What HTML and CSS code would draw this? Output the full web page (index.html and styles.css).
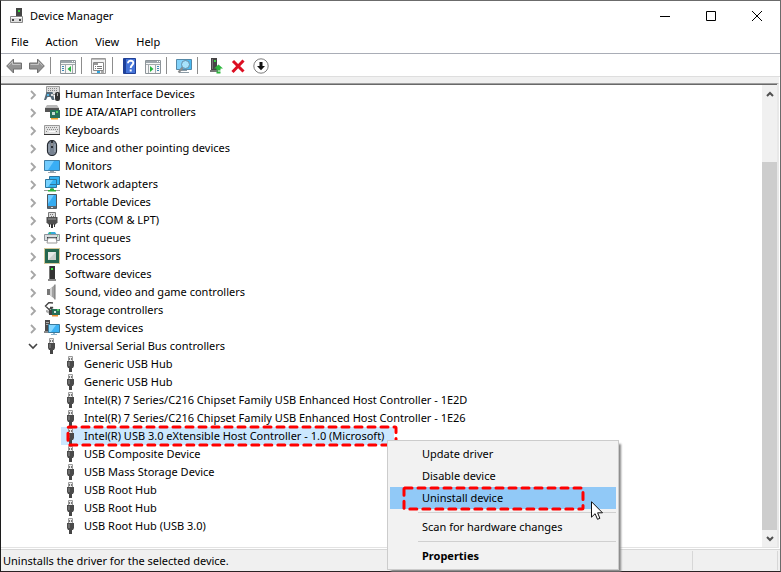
FILE: index.html
```
<!DOCTYPE html>
<html lang="en">
<head>
<meta charset="utf-8">
<title>Device Manager</title>
<link rel="stylesheet" href="styles.css">
</head>
<body>
<svg class="defs" aria-hidden="true">
  <symbol id="usb" viewBox="0 0 16 16">
    <path d="M5.500.500h4v5h-4z" fill="#ececec" stroke="#9c9c9c"/>
    <path d="M6 2h1v2H6zM8 2h1v2H8z" fill="#777"/>
    <path d="M4 5h7v5l-1 2H5l-1-2z" fill="#4a4a4a"/>
    <path d="M5 6h2v4H5z" fill="#6c6c6c"/>
    <path d="M6 12h3v4H6z" fill="#454545"/>
  </symbol>
  <symbol id="right" viewBox="0 0 8 10"><path d="M2 1l4 4-4 4" fill="none" stroke="#a6a6a6" stroke-width="1.800"/></symbol>
  <symbol id="screen" viewBox="0 0 16 16">
    <path d="M.500 2.500h15v10H.500z" fill="#39aef5" stroke="#3f7fa6"/>
    <path d="M1 3h9l-6 9H1z" fill="#72ccff"/>
    <path d="M6 13h4v1H6zM4 14h8v1H4z" fill="#9aa7b0"/>
  </symbol>
</svg>
<main class="window">
  <header class="titlebar">
    <svg class="icon" viewBox="0 0 16 16"><path d="M6 0h6v9H6z" fill="#454545"/><path d="M8 2h2v2H8z" fill="#35d63a"/><path d="M.500 8.500h12v6H.500z" fill="#ddd" stroke="#888"/><path d="M1 9h11v1H1z" fill="#fff"/><path d="M2 11h2v2H2zM9 11h2v2H9z" fill="#444"/></svg>
    <h1>Device Manager</h1>
    <button class="control" aria-label="Minimize"><svg viewBox="0 0 10 10"><path d="M0 5.500h10"/></svg></button>
    <button class="control" aria-label="Maximize"><svg viewBox="0 0 10 10"><path d="M.500.500h9v9h-9z"/></svg></button>
    <button class="control" aria-label="Close"><svg viewBox="0 0 10 10"><path d="M0 0l10 10M10 0L0 10"/></svg></button>
  </header>
  <nav class="menubar"><button>File</button><button>Action</button><button>View</button><button>Help</button></nav>
  <div class="toolbar">
    <button aria-label="Back"><svg class="icon" viewBox="0 0 16 16"><path d="M.700 8L7.500 1v4h8v6h-8v4z" fill="#939393" stroke="#707070"/><path d="M2.500 7.700l4-4.200v3h8" fill="none" stroke="#c4c4c4"/></svg></button>
    <button aria-label="Forward"><svg class="icon" viewBox="0 0 16 16"><path d="M15.300 8L8.500 1v4h-8v6h8v4z" fill="#939393" stroke="#707070"/><path d="M1.500 6.500h8v-3l4 4.200" fill="none" stroke="#c4c4c4"/></svg></button>
    <span class="divider"></span>
    <button aria-label="Show console tree"><svg class="icon" viewBox="0 0 16 16"><path d="M.500 2.500h15v13H.500z" fill="#f7f7f7" stroke="#8d9499"/><path d="M1 3h14v2H1z" fill="#9ca5ab"/><path d="M12 3h1v1h-1zM14 3h1v1h-1z" fill="#fff"/><path d="M1 6.500h14M5.500 7v8M12.500 7v8" stroke="#a3a9ad"/><path d="M2 8h2v1H2zM2 10h2v1H2zM2 12h2v1H2z" fill="#3d86b5"/><path d="M11 8v6l-3.500-3z" fill="#22b43d"/></svg></button>
    <span class="divider"></span>
    <button aria-label="Properties"><svg class="icon" viewBox="0 0 16 16"><path d="M.500.500h14v15H.500z" fill="#f4f4f4" stroke="#999"/><path d="M1 1h13v1H1z" fill="#bbb"/><path d="M2.500 4.500h10v8h-10z" fill="#fff" stroke="#888"/><path d="M3 5h4v2H3z" fill="#999"/><path d="M4 8h1v1H4zM4 10h1v1H4zM6 8h5v1H6zM6 10h5v1H6z" fill="#777"/><path d="M6 13h3v2H6z" fill="#2fa5df"/><path d="M10 13h3v2h-3z" fill="#aaa"/></svg></button>
    <span class="divider"></span>
    <button aria-label="Help"><svg class="icon" viewBox="0 0 16 16"><path d="M1.500.500h12v15h-12z" fill="#4473d8" stroke="#203f95"/><path d="M2 1h2v14H2z" fill="#1d419b"/><path d="M6 5.300c0-3.600 5.700-3.300 5.300-.2C11.100 7 8.700 7.200 8.700 10" fill="none" stroke="#fff" stroke-width="1.900"/><path d="M7.700 11.500h2v2h-2z" fill="#fff"/></svg></button>
    <button aria-label="Show action pane"><svg class="icon" viewBox="0 0 16 16"><path d="M.500 2.500h15v13H.500z" fill="#f7f7f7" stroke="#8d9499"/><path d="M1 3h14v2H1z" fill="#9ca5ab"/><path d="M12 3h1v1h-1zM14 3h1v1h-1z" fill="#fff"/><path d="M1 6.500h14M3.500 7v8M10.500 7v8" stroke="#a3a9ad"/><path d="M12 8h2v1h-2zM12 10h2v1h-2zM12 12h2v1h-2z" fill="#3d86b5"/><path d="M5 8v6l3.500-3z" fill="#22b43d"/></svg></button>
    <span class="divider"></span>
    <button aria-label="Scan for hardware changes"><svg class="icon" viewBox="0 0 16 16"><path d="M.500 1.500h15v10H.500z" fill="#4abaf2" stroke="#5589a8"/><path d="M1 2h8L4 11H1z" fill="#82d2fa"/><path d="M5 12h6v1H5zM3 14h10v1H3z" fill="#8c9ba5"/><path d="M7 9l-4.500 5.500" stroke="#8c8c8c" stroke-width="2"/><circle cx="9.500" cy="6.500" r="4" fill="#a6e2fb" stroke="#668da6"/></svg></button>
    <span class="divider"></span>
    <button aria-label="Update driver"><svg class="icon" viewBox="0 0 16 16"><path d="M4 0h6v13H4z" fill="#444"/><path d="M5 1h1v10H5z" fill="#777"/><path d="M7 2h2v2H7z" fill="#39d042"/><path d="M3 12h8v2H3z" fill="#777"/><path d="M11.500 6.500l4.500 4h-2.500V12h-4v-1.500H7z" fill="#2bb63b"/><path d="M9.500 12.500h4v1h-4zM9.500 14h4v1.500h-4z" fill="#2bb63b"/></svg></button>
    <button aria-label="Uninstall device"><svg class="icon" viewBox="0 0 16 16"><path d="M3 3l10.500 10.500M13.500 2.500l-11 11.500" fill="none" stroke="#dc0e22" stroke-width="3"/></svg></button>
    <button aria-label="Disable device"><svg class="icon" viewBox="0 0 16 16"><circle cx="8" cy="8" r="7.200" fill="#fff" stroke="#7d7d7d"/><path d="M6.500 4h3v4H12l-4 4.300L4 8h2.500z" fill="#111"/></svg></button>
  </div>
  <section class="content">
    <ul class="tree">
      <li><div class="row"><svg class="arrow"><use href="#right"/></svg><svg class="icon" viewBox="0 0 16 16"><path d="M2.500.500h13v8h-13z" fill="#ddd" stroke="#999"/><path d="M4 2.500h10M4 4.500h10" stroke="#888" stroke-dasharray="1 1"/><path d="M2.500 6h6l2 8H8l-1.500-3h-3L2 14H0z" fill="#566a78"/><path d="M3 8h2v2H3z" fill="#53b4e5"/><path d="M7 8h2v2H7z" fill="#ddd"/><rect x="11" y="6" width="5" height="9" rx="2" fill="#333"/><path d="M13 7h1v3h-1z" fill="#aaa"/></svg><span>Human Interface Devices</span></div></li>
      <li><div class="row"><svg class="arrow"><use href="#right"/></svg><svg class="icon" viewBox="0 0 16 16"><path d="M3 1h10l2 3v4H1V4z" fill="#b9b9b9"/><path d="M1 4h14v4H1z" fill="#555"/><path d="M6 6h10v8H6z" fill="#28715b"/><path d="M8 8h3v3H8z" fill="#c8dfd6"/><path d="M12 7h2v2h-2z" fill="#4dca62"/><path d="M7 14h7v1.500H7z" fill="#efa62d"/></svg><span>IDE ATA/ATAPI controllers</span></div></li>
      <li><div class="row"><svg class="arrow"><use href="#right"/></svg><svg class="icon" viewBox="0 0 16 16"><path d="M.500 3.500h15v9H.500z" fill="#e2e2e2" stroke="#999"/><path d="M2 5.500h12M3 7.500h11M2 9.500h2M12 9.500h2" stroke="#888" stroke-dasharray="1 1"/><path d="M5 9h6v1H5z" fill="#fff"/><path d="M0 12h16v1H0z" fill="#333"/></svg><span>Keyboards</span></div></li>
      <li><div class="row"><svg class="arrow"><use href="#right"/></svg><svg class="icon" viewBox="0 0 16 16"><rect x="3.500" y=".500" width="9" height="15" rx="4.500" fill="#778291" stroke="#252a31" stroke-width="1.200"/><path d="M5 4v8M11 4v8" stroke="#aab5c1"/><path d="M7 1h2v7H7z" fill="#292e36"/><path d="M7.500 3h1v3h-1z" fill="#eee"/></svg><span>Mice and other pointing devices</span></div></li>
      <li><div class="row"><svg class="arrow"><use href="#right"/></svg><svg class="icon"><use href="#screen"/></svg><span>Monitors</span></div></li>
      <li><div class="row"><svg class="arrow"><use href="#right"/></svg><svg class="icon" viewBox="0 0 16 16"><path d="M5.500.500h10v8h-10zM1.500 3.500h11v8h-11z" fill="#35b4f4" stroke="#2d769e"/><path d="M2 4h7l-5 7H2z" fill="#77d2ff"/><path d="M7 12h2v1H7zM0 14h16v1H0z" fill="#9d9d9d"/><path d="M6 12.500h4V14h2v1.500H4V14h2z" fill="#2ab13c"/></svg><span>Network adapters</span></div></li>
      <li><div class="row"><svg class="arrow"><use href="#right"/></svg><svg class="icon" viewBox="0 0 16 16"><path d="M3.500.500h9v14h-9z" fill="#34abf1" stroke="#4d565e"/><path d="M4 1h6L4 10z" fill="#70caff"/><path d="M4 12h8v2.500H4z" fill="#5c666e"/><path d="M7 13h2v1H7z" fill="#ddd"/></svg><span>Portable Devices</span></div></li>
      <li><div class="row"><svg class="arrow"><use href="#right"/></svg><svg class="icon" viewBox="0 0 16 16"><path d="M4.500.500h7v5h-7z" fill="#ddd" stroke="#777"/><path d="M6 2h1v1H6zM8 2h1v1H8zM7 4h1v1H7zM9 4h1v1H9z" fill="#777"/><path d="M2.500 5h11v5.500l-2 2h-7l-2-2z" fill="#505050"/><path d="M4 6h8v2H4z" fill="#777"/><path d="M5 12h1v3H5zM7 12h2v4H7zM10 12h1v3h-1z" fill="#333"/></svg><span>Ports (COM &amp; LPT)</span></div></li>
      <li><div class="row"><svg class="arrow"><use href="#right"/></svg><svg class="icon" viewBox="0 0 16 16"><path d="M3 5l2-3h6l2 3z" fill="#36a9da"/><path d="M5 2h2v3H5z" fill="#3cba84"/><path d="M.500 4.500h15v6H.500z" fill="#d9dde0" stroke="#8d9499"/><path d="M3 7h10v4H3z" fill="#303940"/><path d="M4 8h8l1 5H3z" fill="#fff" stroke="#999"/><path d="M13 5.500h1v1h-1z" fill="#38b54e"/></svg><span>Print queues</span></div></li>
      <li><div class="row"><svg class="arrow"><use href="#right"/></svg><svg class="icon" viewBox="0 0 16 16"><path d="M.500.500h15v15H.500z" fill="none" stroke="#a69035" stroke-dasharray="1 1"/><path d="M1 1h14v14H1z" fill="#25674f"/><path d="M4 4h8v8H4z" fill="#c9cfcc"/><path d="M4 4h8l-8 8z" fill="#e6e9e7"/></svg><span>Processors</span></div></li>
      <li><div class="row"><svg class="arrow"><use href="#right"/></svg><svg class="icon" viewBox="0 0 16 16"><path d="M5 0h6v14H5z" fill="#333"/><path d="M5 0h1v14H5z" fill="#777"/><path d="M7 2h2v2H7z" fill="#3bea3f"/><path d="M4 13h8v2H4z" fill="#888"/></svg><span>Software devices</span></div></li>
      <li><div class="row"><svg class="arrow"><use href="#right"/></svg><svg class="icon" viewBox="0 0 16 16"><path d="M3 5h3v6H3z" fill="#777"/><path d="M6 5l5-4.500v15L6 11z" fill="#a2a2a2"/><path d="M11 .500v15" stroke="#707070"/><path d="M6 5l2-2v10l-2-2z" fill="#d2d2d2"/></svg><span>Sound, video and game controllers</span></div></li>
      <li><div class="row"><svg class="arrow"><use href="#right"/></svg><svg class="icon" viewBox="0 0 16 16"><path d="M9 1L5 .500 1.500 4 5 7.500 9 5.500H6" fill="none" stroke="#454545" stroke-width="1.400"/><path d="M2 8l5 1v4l-5-3z" fill="#aaa"/><path d="M7 7h9v6H7z" fill="#276f58"/><path d="M5 8h3v5H5z" fill="#444"/><path d="M10 9h2v2h-2z" fill="#d5e6df"/><path d="M13 7h2v2h-2z" fill="#51ca67"/><path d="M8 13h6v1.500H8z" fill="#ec8b2d"/></svg><span>Storage controllers</span></div></li>
      <li><div class="row"><svg class="arrow"><use href="#right"/></svg><svg class="icon" viewBox="0 0 16 16"><path d="M1 0h5v13H1z" fill="#4b4b4b"/><path d="M2 2h3v1H2zM2 4h3v1H2z" fill="#aaa"/><path d="M0 11h5v2H0z" fill="#888"/><path d="M4.500 4.500h11v8h-11z" fill="#3cb3f5" stroke="#397a9d"/><path d="M5 5h7l-5 7H5z" fill="#83d6ff"/><path d="M9 13h2v1H9zM7 14h6v1H7z" fill="#8eb3ca"/></svg><span>System devices</span></div></li>
      <li><div class="row"><svg class="arrow open" viewBox="0 0 10 8"><path d="M1 2l4 4 4-4" fill="none" stroke="#444" stroke-width="1.600"/></svg><svg class="icon"><use href="#usb"/></svg><span>Universal Serial Bus controllers</span></div>
        <ul>
          <li class="row"><svg class="icon"><use href="#usb"/></svg><span>Generic USB Hub</span></li>
          <li class="row"><svg class="icon"><use href="#usb"/></svg><span>Generic USB Hub</span></li>
          <li class="row"><svg class="icon"><use href="#usb"/></svg><span>Intel(R) 7 Series/C216 Chipset Family USB Enhanced Host Controller - 1E2D</span></li>
          <li class="row"><svg class="icon"><use href="#usb"/></svg><span>Intel(R) 7 Series/C216 Chipset Family USB Enhanced Host Controller - 1E26</span></li>
          <li class="row selected"><svg class="icon"><use href="#usb"/></svg><span>Intel(R) USB 3.0 eXtensible Host Controller - 1.0 (Microsoft)</span><svg class="mark"><rect x="1" y="1"/></svg></li>
          <li class="row"><svg class="icon"><use href="#usb"/></svg><span>USB Composite Device</span></li>
          <li class="row"><svg class="icon"><use href="#usb"/></svg><span>USB Mass Storage Device</span></li>
          <li class="row"><svg class="icon"><use href="#usb"/></svg><span>USB Root Hub</span></li>
          <li class="row"><svg class="icon"><use href="#usb"/></svg><span>USB Root Hub</span></li>
          <li class="row"><svg class="icon"><use href="#usb"/></svg><span>USB Root Hub (USB 3.0)</span></li>
        </ul>
      </li>
    </ul>
    <div class="scrollbar">
      <button aria-label="Scroll up"><svg viewBox="0 0 8 6"><path d="M1 5l3-3 3 3"/></svg></button>
      <div class="track"><div class="thumb"></div></div>
      <button aria-label="Scroll down"><svg viewBox="0 0 8 6"><path d="M1 1l3 3 3-3"/></svg></button>
    </div>
  </section>
  <footer class="status"><span class="message">Uninstalls the driver for the selected device.</span><span class="pane"></span></footer>
</main>
<div class="context" role="menu">
  <button role="menuitem">Update driver</button>
  <button role="menuitem">Disable device</button>
  <button role="menuitem" class="active">Uninstall device<svg class="mark"><rect x="1" y="1"/></svg></button>
  <hr>
  <button role="menuitem">Scan for hardware changes</button>
  <hr>
  <button role="menuitem" class="default">Properties</button>
  <svg class="pointer" viewBox="0 0 12 19"><path d="M.500.700v15.500l3.600-3.500 2.400 5.600 2.400-1-2.300-5.500h4.900z" fill="#fff" stroke="#111"/></svg>
</div>
</body>
</html>
```
FILE: styles.css
```
* { box-sizing: border-box; }
body {
  margin: 0;
  background: #fff;
  color: #000;
  font: 11px/18px "Noto Sans", "Segoe UI", sans-serif;
}
button {
  margin: 0;
  padding: 0;
  border: 0;
  background: none;
  color: inherit;
  font: inherit;
}
ul { margin: 0; padding: 0; list-style: none; }
.defs { position: absolute; width: 0; height: 0; }
.icon { flex: none; display: block; width: 16px; height: 16px; }

.window {
  display: flex;
  flex-direction: column;
  min-height: 100vh;
  border: 1px solid #6b6b6b;
  border-left-color: #1c1c1c;
  border-bottom-color: #2a2224;
}

.titlebar { display: flex; align-items: center; height: 30px; padding-left: 9px; }
.titlebar h1 { flex: 1; margin: 0 0 0 4px; font-size: 11px; font-weight: 400; }
.control { width: 46px; height: 30px; }
.control svg { display: block; width: 10px; height: 10px; margin: 0 auto; overflow: visible; }
.control path { fill: none; stroke: #000; }

.menubar {
  display: flex;
  align-items: flex-start;
  gap: 17px;
  height: 23px;
  padding: 2px 10px 0;
  border-bottom: 1px solid #a9adb6;
}
.toolbar {
  display: flex;
  align-items: center;
  height: 23px;
  padding-left: 1px;
  border-bottom: 1px solid #dedede;
}
.toolbar button { display: grid; place-items: center; width: 23px; height: 22px; padding-top: 2px; }
.divider { width: 1px; height: 17px; margin: 1px 5px 0 2px; background: #8d8d8d; }

.content {
  display: flex;
  flex: 1;
  margin: 6px 1px 0 0;
  border-top: 1px solid #a0a0a0;
  border-right: 2px solid #e8e8e8;
  border-bottom: 1px solid #e3e3e3;
  box-shadow: 0 -6px #f0f0f0;
}
.tree { flex: 1; border-top: 1px solid #696969; padding-left: 28px; }
.row { display: flex; align-items: center; width: max-content; height: 18px; }
.arrow { flex: none; width: 8px; height: 10px; margin: 1px 7px 0 0; }
.arrow.open { width: 10px; height: 8px; margin: 0 5px 0 -1px; }
.row .icon { margin-right: 5px; }
.arrow.open + .icon { margin-left: 1px; }
.tree ul { padding-left: 32px; }
.tree ul .row { padding-left: 2px; }
.selected { position: relative; min-width: 333px; background: #cce8ff; }
.mark { position: absolute; overflow: visible; }
.mark rect {
  width: calc(100% - 2px);
  height: calc(100% - 2px);
  fill: none;
  stroke: #f00;
  stroke-width: 3;
  stroke-dasharray: 7 6;
  stroke-linecap: round;
  rx: 1px;
}
.selected .mark { left: 6px; top: -1px; width: calc(100% - 3px); height: 20px; }

.scrollbar { display: flex; flex-direction: column; width: 15px; border-top: 1px solid #696969; background: #f0f0f0; }
.scrollbar button { height: 17px; }
.scrollbar svg { display: block; width: 8px; height: 6px; margin: 0 auto; }
.scrollbar path { fill: none; stroke: #505050; stroke-width: 2; }
.track { flex: 1; display: flex; flex-direction: column; justify-content: flex-end; }
.thumb { height: 86%; background: #cdcdcd; }

.status {
  display: flex;
  height: 22px;
  margin-top: 1px;
  padding: 1px 2px 1px 0;
  border-top: 1px solid #d7d7d7;
  background: #f0f0f0;
}
.message { flex: 1; padding-left: 2px; border-right: 1px solid #d7d7d7; line-height: 20px; }
.pane { width: 85px; border-right: 1px solid #d7d7d7; }

.context {
  position: absolute;
  left: 387px;
  top: 440px;
  width: 232px;
  padding: 2px;
  border: 1px solid #ccc;
  background: #f2f2f2;
  box-shadow: 3px 3px 2px -1px #888;
}
.context button { position: relative; display: block; width: 100%; height: 22px; padding-left: 32px; text-align: left; }
.context hr { height: 1px; margin: 3px 0 3px 28px; border: 0; background: #d0d0d0; }
.context .active { background: #91c9f7; }
.context .default { font-weight: 700; }
.active .mark { left: 13px; top: 0; width: 181px; height: 23px; }
.pointer { position: absolute; left: 203px; top: 60px; width: 12px; height: 19px; }
```
